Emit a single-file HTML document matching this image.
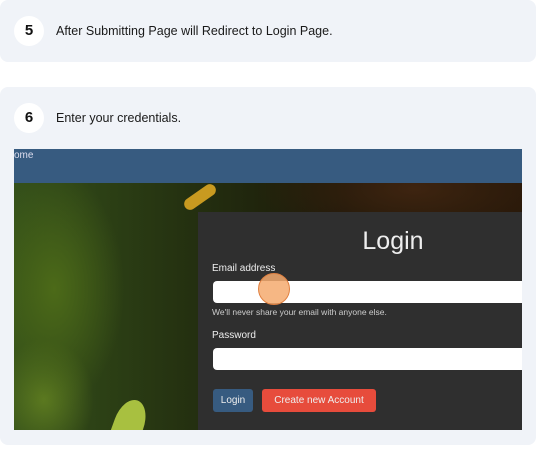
<!DOCTYPE html>
<html><head><style>
*{margin:0;padding:0;box-sizing:border-box}
body{width:536px;height:470px;background:#fff;position:relative;overflow:hidden;font-family:"Liberation Sans",sans-serif}
.card{position:absolute;left:0;width:536px;background:#f0f3f8;border-radius:8px}
.badge{position:absolute;width:30px;height:30px;border-radius:50%;background:#fff;font-weight:bold;font-size:15px;text-align:center;line-height:30px;color:#111}
.t{position:absolute;left:56px;font-size:12.5px;color:#1a1a1a}
.shot{position:absolute;left:14px;top:149px;width:508px;height:281px;overflow:hidden;
background:radial-gradient(ellipse 70px 120px at 40px 140px,#4c6a18,transparent),radial-gradient(ellipse 50px 60px at 30px 250px,#5c7a20,transparent),radial-gradient(ellipse 160px 60px at 400px 40px,#3e2410,transparent),linear-gradient(90deg,#34501a,#243010 35%,#1a1608 65%,#241608)}
.nav{position:absolute;left:0;top:0;width:100%;height:34px;background:#375b80;color:#dde;font-size:10px;padding:1px 0 0 0}
.panel{position:absolute;left:184px;top:63px;width:330px;height:230px;background:#2f2f2f;color:#eee}
.in{position:absolute;left:15px;width:320px;height:22px;background:#fff;border-radius:4px}
.lbl{position:absolute;left:14px;font-size:10px}
</style></head><body>
<div class="card" style="top:0;height:62px"></div>
<div class="badge" style="left:14px;top:16px">5</div>
<div class="t" style="top:24px">After Submitting Page will Redirect to Login Page.</div>
<div class="card" style="top:87px;height:358px"></div>
<div class="badge" style="left:14px;top:103px">6</div>
<div class="t" style="top:111px">Enter your credentials.</div>
<div class="shot">
<div class="nav">ome</div>
<div style="position:absolute;left:168px;top:42px;width:36px;height:12px;background:#c89a20;transform:rotate(-35deg);border-radius:6px"></div>
<div style="position:absolute;left:100px;top:250px;width:30px;height:50px;background:#a8c040;transform:rotate(20deg);border-radius:50% 50% 10px 10px"></div>
<div class="panel">
<div style="position:absolute;left:0;width:100%;top:15px;text-align:center;font-size:25px;color:#eee;padding-left:60px">Login</div>
<div class="lbl" style="top:51px">Email address</div>
<div class="in" style="top:69px"></div>
<div style="position:absolute;left:60px;top:61px;width:32px;height:32px;border-radius:50%;background:rgba(245,170,110,.85);border:1px solid #e08040"></div>
<div class="lbl" style="top:95px;font-size:8.5px;color:#ccc">We'll never share your email with anyone else.</div>
<div class="lbl" style="top:118px">Password</div>
<div class="in" style="top:136px"></div>
<div style="position:absolute;left:15px;top:177px;width:40px;height:23px;background:#375b80;border-radius:3px;font-size:10px;line-height:23px;text-align:center">Login</div>
<div style="position:absolute;left:64px;top:177px;width:114px;height:23px;background:#e74c3c;border-radius:3px;font-size:10px;line-height:23px;text-align:center">Create new Account</div>
</div>
</div>
</body></html>
